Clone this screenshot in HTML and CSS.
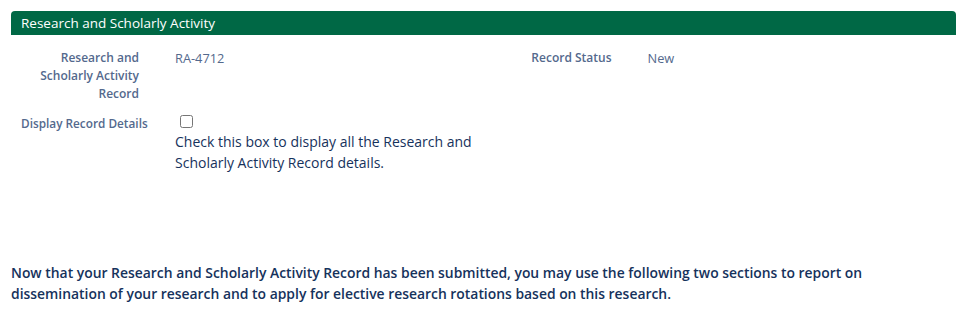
FILE: index.html
```html
<!DOCTYPE html>
<html lang="en">
<head>
  <meta charset="UTF-8">
  <title>Research and Scholarly Activity</title>
  <link rel="stylesheet" href="styles.css">
</head>
<body>
  <div class="page">
    <!-- Section header -->
    <div class="section-head">Research and Scholarly Activity</div>

    <div class="detail-grid">
      <div class="detail-row">
        <div class="label">Research and Scholarly Activity Record</div>
        <div class="value">RA-4712</div>
      </div>
      <div class="detail-row">
        <div class="label">Record Status</div>
        <div class="value">New</div>
      </div>
    </div>

    <div class="check-row">
      <label class="check-label" for="displayDetails">Display Record Details</label>
      <div class="check-field">
        <input type="checkbox" id="displayDetails" class="check-box">
        <p class="help">Check this box to display all the Research and<br>Scholarly Activity Record details.</p>
      </div>
    </div>

    <p class="notice">Now that your Research and Scholarly Activity Record has been submitted, you may use the following two sections to report on dissemination of your research and to apply for elective research rotations based on this research.</p>
  </div>
</body>
</html>
```

FILE: styles.css
```css
body {
  margin: 0;
  font-family: "Open Sans", Arial, sans-serif;
  color: #16325c;
  background: white;
}

.page {
  padding: 11px 13px 0 11px;
}

.section-head {
  background-color: #006845;
  color: white;
  font-size: 13.5px;
  height: 24px;
  line-height: 24px;
  padding-left: 10px;
  border-radius: 4px 4px 0 0;
}

.detail-grid {
  display: grid;
  grid-template-columns: 1fr 1fr;
  margin-top: 14px;
}

.detail-row {
  display: flex;
  font-size: 12px;
  line-height: 18px;
}

.detail-row .label {
  flex: none;
  width: 118px;
  margin-left: 10px;
  text-align: right;
  font-weight: 600;
  color: #54698d;
}

.detail-row .value {
  margin-left: 36px;
  font-size: 12.8px;
  color: #54698d;
}

.check-row {
  display: flex;
  margin-top: 12px;
}

.check-label {
  width: 154px;
  padding-left: 10px;
  font-size: 11.8px;
  font-weight: 600;
  line-height: 18px;
  color: #54698d;
  margin-top: -1px;
}

.check-field {
  display: flex;
  flex-direction: column;
}

.check-box {
  width: 13px;
  height: 13px;
  margin: 0 0 0 5px;
}

.help {
  margin: 3px 0 0 0;
  font-size: 14px;
  line-height: 21px;
  color: #16325c;
}

.notice {
  margin: 89px 0 0 0;
  font-size: 13.9px;
  line-height: 21px;
  font-weight: 600;
  color: #16325c;
  max-width: 900px;
}
```
